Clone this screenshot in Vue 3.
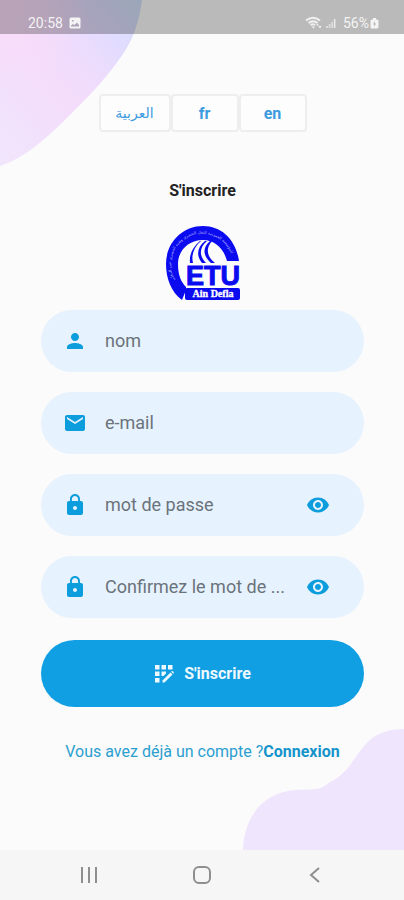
<script setup>
import { reactive, ref } from 'vue'

const languages = [
  { code: 'ar', label: 'العربية' },
  { code: 'fr', label: 'fr' },
  { code: 'en', label: 'en' },
]
const language = ref('fr')

const fields = [
  { id: 'name', label: 'nom', type: 'text', icon: 'person' },
  { id: 'email', label: 'e-mail', type: 'email', icon: 'mail' },
  { id: 'password', label: 'mot de passe', type: 'password', icon: 'lock' },
  { id: 'confirm', label: 'Confirmez le mot de ...', type: 'password', icon: 'lock' },
]
const values = reactive({ name: '', email: '', password: '', confirm: '' })
const visible = reactive({ password: false, confirm: false })

const icons = {
  person: 'M12 12c2.21 0 4-1.79 4-4s-1.79-4-4-4-4 1.79-4 4 1.79 4 4 4zm0 2c-2.67 0-8 1.34-8 4v2h16v-2c0-2.66-5.33-4-8-4z',
  mail: 'M20 4H4c-1.1 0-2 .9-2 2v12c0 1.1.9 2 2 2h16c1.1 0 2-.9 2-2V6c0-1.1-.9-2-2-2zm0 4-8 5-8-5V6l8 5 8-5v2z',
  lock: 'M18 8h-1V6c0-2.76-2.24-5-5-5S7 3.24 7 6v2H6c-1.1 0-2 .9-2 2v10c0 1.1.9 2 2 2h12c1.1 0 2-.9 2-2V10c0-1.1-.9-2-2-2zm-6 9c-1.1 0-2-.9-2-2s.9-2 2-2 2 .9 2 2-.9 2-2 2zm3.1-9H8.9V6c0-1.71 1.39-3.1 3.1-3.1s3.1 1.39 3.1 3.1v2z',
}
</script>

<template>
  <div class="screen">
    <svg class="blob blob-top" viewBox="0 0 142 168" aria-hidden="true">
      <defs>
        <linearGradient id="wash" x1="0" y1="1" x2="1" y2="0">
          <stop offset="0" stop-color="#f0e6fc" />
          <stop offset="0.45" stop-color="#f4dcfb" />
          <stop offset="0.62" stop-color="#eedcfc" />
          <stop offset="0.8" stop-color="#e0dcff" />
          <stop offset="1" stop-color="#d0e2f8" />
        </linearGradient>
        <radialGradient id="blush" gradientUnits="userSpaceOnUse" cx="0" cy="0" r="90">
          <stop offset="0" stop-color="#fadcf8" />
          <stop offset="1" stop-color="#fadcf8" stop-opacity="0" />
        </radialGradient>
      </defs>
      <path d="M0 0H142C139 22 133 42 118 61C103 82 86 99 70 115C48 137 25 158 0 166Z" fill="url(#wash)" />
      <path d="M0 0H142C139 22 133 42 118 61C103 82 86 99 70 115C48 137 25 158 0 166Z" fill="url(#blush)" />
    </svg>
    <svg class="blob blob-bottom" viewBox="0 0 161 122" aria-hidden="true">
      <path d="M0 122C1 86 23 64 52 62C70 61 77 63 87 54C106 45 111 29 121 18C132 5 145 1 161 1V122Z" fill="#efe5fd" />
    </svg>

    <header class="status">
      <div class="status-group">
        <span>20:58</span>
        <svg class="status-picture" viewBox="0 0 12 12" aria-hidden="true">
          <path fill-rule="evenodd" d="M2 0.5H10A1.5 1.5 0 0 1 11.5 2V10A1.5 1.5 0 0 1 10 11.5H2A1.5 1.5 0 0 1 .5 10V2A1.5 1.5 0 0 1 2 .5ZM2 9.5H10V8L8 5.5 5.5 8 4 7 2 8.5ZM3 3V4.5H4.5V3Z" />
        </svg>
      </div>
      <div class="status-group status-right">
        <svg class="status-wifi" viewBox="0 0 18 14" aria-hidden="true">
          <path d="M1 4.5Q8 -1 15 4.500M3.5 7Q8 3.5 12.5 7M5.5 9Q8 7.5 10 9" fill="none" stroke="#f0f0f0" stroke-width="2" />
          <path d="M6.5 10.5L8.5 12.5 10 10.5ZM11 9.5L12.5 7.5 14 9.5ZM13.5 10L15 12.5 16.5 10Z" />
        </svg>
        <svg class="status-signal" viewBox="0 0 10 12" aria-hidden="true">
          <path d="M0 9H2V11H0ZM2.7 7H4.5V11H2.7ZM5.3 5H7V11H5.3Z" opacity=".6" />
          <path d="M7.8 2H9.5V11H7.8Z" opacity=".8" />
        </svg>
        <span>56%</span>
        <svg class="status-battery" viewBox="0 0 9 12" aria-hidden="true">
          <path fill-rule="evenodd" d="M3 1H6V2.5H7Q8.5 2.5 8.5 4V10Q8.5 11.5 7 11.5H2Q.5 11.5 .5 10V4Q.5 2.5 2 2.5H3ZM5 4L3 7.5H4.3L4 10 6.2 6.5H5Z" />
        </svg>
      </div>
    </header>

    <main class="content">
      <div class="languages" role="group" aria-label="Langue">
        <button
          v-for="item in languages"
          :key="item.code"
          type="button"
          class="language"
          :class="{ arabic: item.code === 'ar' }"
          :lang="item.code"
          :aria-pressed="language === item.code"
          @click="language = item.code"
        >{{ item.label }}</button>
      </div>

      <h1>S'inscrire</h1>

      <svg class="logo" viewBox="0 0 76 76" role="img" aria-label="ETU Ain Defla">
        <path fill="#0b0bf0" d="M17 75C6 67 1 53 1 39C1 18 17 1 38 1C57 1 71 15 74 36H62C59 24 50 15 38 15C23 15 13 26 13 39C13 50 16 57 21 62L21 65Z" />
        <path id="rim" fill="none" d="M12 58A31 31 0 1 1 67 32" />
        <text class="rim-text"><textPath href="#rim" startOffset="50%" text-anchor="middle">المؤسسة العمومية للنقل الحضري وشبه الحضري عين الدفلى</textPath></text>
        <path
          fill="#0b0bf0"
          d="M35 16C28 22 24 29 25 38H28C26 30 29 22 36 16ZM40 16C32 22 31 31 37 38H41C34 31 34 23 42 16ZM45 16C37 23 38 31 46 38H50C41 31 41 23 47 16Z"
        />
        <text class="logo-main" x="48" y="60" text-anchor="middle">ETU</text>
        <rect x="20" y="63" width="55" height="12" rx="2" fill="#0b0bf0" />
        <text class="logo-sub" x="48" y="72" text-anchor="middle">Ain Defla</text>
      </svg>

      <form class="form" @submit.prevent>
        <div v-for="field in fields" :key="field.id" class="field">
          <label :for="field.id" :aria-label="field.label">
            <svg class="icon" viewBox="0 0 24 24" aria-hidden="true"><path :d="icons[field.icon]" /></svg>
          </label>
          <input
            :id="field.id"
            v-model="values[field.id]"
            :type="visible[field.id] ? 'text' : field.type"
            :placeholder="field.label"
          />
          <button
            v-if="field.type === 'password'"
            type="button"
            class="reveal"
            aria-label="Afficher le mot de passe"
            @click="visible[field.id] = !visible[field.id]"
          >
            <svg class="icon" viewBox="0 0 24 24" aria-hidden="true">
              <path d="M12 4.5C7 4.5 2.73 7.61 1 12c1.73 4.39 6 7.5 11 7.5s9.27-3.11 11-7.5c-1.73-4.39-6-7.5-11-7.5zM12 17c-2.76 0-5-2.24-5-5s2.24-5 5-5 5 2.24 5 5-2.24 5-5 5zm0-8c-1.66 0-3 1.34-3 3s1.34 3 3 3 3-1.34 3-3-1.34-3-3-3z" />
            </svg>
          </button>
        </div>

        <button type="submit" class="submit">
          <svg class="submit-icon" viewBox="0 0 20 20" aria-hidden="true">
            <path d="M1 1H5.5V5.5H1ZM7.5 1H12V5.5H7.5ZM14 1H18.5V5.5H14ZM1 7.5H5.5V12H1ZM1 14H5.5V18.5H1ZM7.5 7.5H12V9.5L9.5 12H7.5ZM8.5 16.5L16.500 8.500 18.500 10.500 10.500 18.500H8.500ZM17.200 7.800L18 7Q18.400 6.800 18.800 7.200L19.800 8.200Q20 8.600 19.800 9L19.200 9.800Z" />
          </svg>
          <span>S'inscrire</span>
        </button>
      </form>

      <p class="login">Vous avez déjà un compte ?<a href="#connexion">Connexion</a></p>
    </main>

    <nav class="system" aria-label="Navigation système">
      <button type="button" aria-label="Applications récentes">
        <svg viewBox="0 0 20 20" aria-hidden="true"><path d="M3 2V18M10 2V18M17 2V18" /></svg>
      </button>
      <button type="button" aria-label="Accueil">
        <svg viewBox="0 0 20 20" aria-hidden="true"><rect x="2" y="2" width="16" height="16" rx="5" /></svg>
      </button>
      <button type="button" aria-label="Retour">
        <svg viewBox="0 0 20 20" aria-hidden="true"><path d="M14 3L6 10L14 17" /></svg>
      </button>
    </nav>
  </div>
</template>

<style>
body {
  margin: 0;
  background: #fbfbfb;
}
</style>

<style scoped>
.screen {
  position: relative;
  display: flex;
  flex-direction: column;
  min-height: 100vh;
  background: #fbfbfb;
  font-family: Roboto, "Noto Sans", sans-serif;
}

button {
  margin: 0;
  padding: 0;
  border: 0;
  background: none;
  font: inherit;
  cursor: pointer;
}

.blob {
  position: absolute;
  pointer-events: none;
}

.blob-top {
  top: 0;
  left: 0;
  width: 142px;
}

.blob-bottom {
  right: 0;
  bottom: 50px;
  width: 161px;
}

.status {
  position: relative;
  display: flex;
  justify-content: space-between;
  box-sizing: border-box;
  height: 34px;
  padding: 12px 25px 0 28px;
  background: rgba(0, 0, 0, 0.26);
  color: #f4f4f4;
  font-size: 14px;
  line-height: 22px;
}

.status-group {
  display: flex;
  align-items: center;
  gap: 6px;
}

.status-right {
  gap: 3px;
}

.status svg {
  fill: #f4f4f4;
}

.status-picture {
  width: 12px;
  height: 12px;
}

.status-wifi {
  width: 18px;
  height: 14px;
}

.status-signal {
  width: 10px;
  height: 12px;
  margin-right: 4px;
}

.status-battery {
  width: 9px;
  height: 12px;
  margin-left: -2px;
}

.content {
  position: relative;
  display: flex;
  flex: 1;
  flex-direction: column;
  align-items: center;
  padding: 60px 40px 0 41px;
}

.languages {
  display: flex;
}

.language {
  box-sizing: border-box;
  width: 68px;
  height: 38px;
  border: 2px solid #eee;
  border-radius: 4px;
  background: #fdfdfd;
  color: #3d9be0;
  font-size: 16px;
  font-weight: 700;
}

.arabic {
  width: 72px;
  font-family: "DejaVu Sans", sans-serif;
  font-size: 14px;
  font-weight: 400;
}

h1 {
  margin: 49px 0 24px;
  color: #222;
  font-size: 16px;
  font-weight: 700;
  line-height: 20px;
}

.logo {
  width: 76px;
  height: 76px;
  margin-bottom: 9px;
}

.rim-text {
  fill: #b4b4fa;
  font-family: "DejaVu Sans", sans-serif;
  font-size: 4px;
}

.logo-main {
  fill: #0b0bf0;
  stroke: #0b0bf0;
  stroke-width: 1;
  font-family: "Liberation Sans", sans-serif;
  font-size: 27px;
  font-weight: 700;
}

.logo-sub {
  fill: #fff;
  stroke: #fff;
  stroke-width: 0.3;
  font-family: "Liberation Serif", serif;
  font-size: 10px;
  font-weight: 700;
}

.form {
  display: flex;
  flex-direction: column;
  gap: 20px;
  width: 100%;
}

.field {
  display: flex;
  align-items: center;
  box-sizing: border-box;
  height: 62px;
  padding: 0 34px 0 22px;
  border-radius: 31px;
  background: #e6f2fe;
}

.field label {
  display: flex;
  margin-right: 18px;
}

.icon {
  width: 24px;
  height: 24px;
  fill: #0c9ddd;
}

.field input {
  flex: 1;
  min-width: 0;
  padding: 0;
  border: 0;
  outline: 0;
  background: none;
  color: #333;
  font: inherit;
  font-size: 18px;
  line-height: 24px;
}

.field input::placeholder {
  color: #6b737b;
  opacity: 1;
}

.reveal {
  display: flex;
}

.submit {
  display: flex;
  align-items: center;
  justify-content: center;
  gap: 10px;
  height: 67px;
  margin-top: 2px;
  border-radius: 34px;
  background: #119fe3;
  color: #eef8ff;
  font-size: 16px;
  font-weight: 700;
}

.submit-icon {
  width: 20px;
  height: 20px;
  fill: #eef8ff;
}

.login {
  margin: 35px 0;
  color: #2a9fd0;
  font-size: 16px;
  line-height: 20px;
}

.login a {
  color: #1594cb;
  font-weight: 700;
  text-decoration: none;
}

.system {
  position: relative;
  display: grid;
  grid-template-columns: repeat(3, 1fr);
  height: 50px;
  padding: 0 32px;
  background: #f6f6f6;
}

.system button {
  display: flex;
  align-items: center;
  justify-content: center;
}

.system svg {
  width: 20px;
  height: 20px;
  fill: none;
  stroke: #8e8e8e;
  stroke-width: 2;
}
</style>
